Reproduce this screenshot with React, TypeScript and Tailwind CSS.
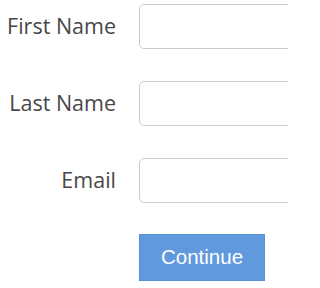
export default function App() {
  const fields = ["First Name", "Last Name", "Email"];
  return (
    <div className="w-[288px] h-[288px] overflow-hidden bg-white font-['Open_Sans',sans-serif]">
      <div className="flex flex-col gap-[32px] pt-[4px]">
        {fields.map((f) => (
          <div key={f} className="flex items-center">
            <label className="w-[116px] shrink-0 text-right text-[21.5px] text-[#484848]">{f}</label>
            <input className="ml-[23px] w-[200px] h-[45px] shrink-0 rounded-[5px] border border-[#ccc] bg-white" />
          </div>
        ))}
      </div>
      <button className="ml-[139px] mt-[31px] w-[126px] h-[47px] bg-[#6199df] border border-[#5a8fd4] text-white text-[20.5px] font-['Liberation_Sans',sans-serif]">
        Continue
      </button>
    </div>
  );
}
